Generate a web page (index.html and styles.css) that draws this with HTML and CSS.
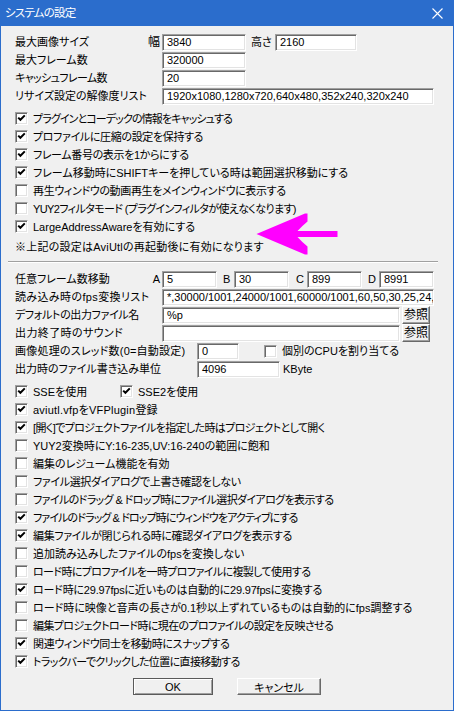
FILE: index.html
```html
<!DOCTYPE html>
<html lang="ja">
<head>
<meta charset="utf-8">
<title>システムの設定</title>
<link rel="stylesheet" href="styles.css">
</head>
<body>
<div class="win">
  <div class="titlebar">
    <span class="title">システムの設定</span>
    <svg class="close" width="11" height="11" viewBox="0 0 11 11"><path d="M0.5 0.5 L10.5 10.5 M10.5 0.5 L0.5 10.5" stroke="#fff" stroke-width="1.1" fill="none"/></svg>
  </div>
  <div class="content">
    <div class="row">
      <div class="lbl w147"><span>最大画像サイズ</span><span class="pre">幅</span></div>
      <div class="inp w84">3840</div>
      <span class="mid">高さ</span>
      <div class="inp w82">2160</div>
    </div>
    <div class="row">
      <div class="lbl w147"><span>最大フレーム数</span></div>
      <div class="inp w84">320000</div>
    </div>
    <div class="row">
      <div class="lbl w147"><span class="s2">キャッシュフレーム数</span></div>
      <div class="inp w84">20</div>
    </div>
    <div class="row">
      <div class="lbl w147"><span>リサイズ設定の解像度リスト</span></div>
      <div class="inp w272">1920x1080,1280x720,640x480,352x240,320x240</div>
    </div>

    <div class="group g1">
      <div class="cbrow"><span class="cb on"></span><span class="s3">プラグインとコーデックの情報をキャッシュする</span></div>
      <div class="cbrow"><span class="cb on"></span><span class="s1">プロファイルに圧縮の設定を保持する</span></div>
      <div class="cbrow"><span class="cb on"></span><span class="s1">フレーム番号の表示を1からにする</span></div>
      <div class="cbrow"><span class="cb on"></span><span>フレーム移動時にSHIFTキーを押している時は範囲選択移動にする</span></div>
      <div class="cbrow"><span class="cb"></span><span class="s1">再生ウィンドウの動画再生をメインウィンドウに表示する</span></div>
      <div class="cbrow"><span class="cb"></span><span class="s2">YUY2フィルタモード (プラグインフィルタが使えなくなります)</span></div>
      <div class="cbrow"><span class="cb on"></span><span>LargeAddressAwareを有効にする</span></div>
    </div>
    <div class="note"><span class="p1">※上記の設定はAviUtlの再起動後に有効になります</span></div>

    <div class="sep"></div>

    <div class="group g2">
      <div class="row">
        <div class="lbl w147"><span>任意フレーム数移動</span><span class="pre2">A</span></div>
        <div class="inp w55">5</div>
        <span class="let">B</span>
        <div class="inp w55">30</div>
        <span class="let c">C</span>
        <div class="inp w55">899</div>
        <span class="let">D</span>
        <div class="inp w55">8991</div>
      </div>
      <div class="row">
        <div class="lbl w147"><span class="p2">読み込み時のfps変換リスト</span></div>
        <div class="inp w272">*,30000/1001,24000/1001,60000/1001,60,50,30,25,24,20,15,12,10</div>
      </div>
      <div class="row">
        <div class="lbl w147"><span class="s1">デフォルトの出力ファイル名</span></div>
        <div class="inp w238">%p</div>
        <span class="btn small">参照</span>
      </div>
      <div class="row">
        <div class="lbl w147"><span class="p2">出力終了時のサウンド</span></div>
        <div class="inp w238"></div>
        <span class="btn small">参照</span>
      </div>
      <div class="row">
        <div class="lbl w182"><span class="p1">画像処理のスレッド数(0=自動設定)</span></div>
        <div class="inp w42">0</div>
        <span class="cb cpu"></span><span>個別のCPUを割り当てる</span>
      </div>
      <div class="row">
        <div class="lbl w182"><span>出力時のファイル書き込み単位</span></div>
        <div class="inp w83">4096</div>
        <span class="unit">KByte</span>
      </div>
    </div>

    <div class="group g3">
      <div class="cbrow">
        <span class="pair"><span class="cb on"></span><span>SSEを使用</span></span>
        <span class="cb on"></span><span>SSE2を使用</span>
      </div>
      <div class="cbrow"><span class="cb on"></span><span class="p1">aviutl.vfpをVFPlugin登録</span></div>
      <div class="cbrow"><span class="cb on"></span><span class="s2">[開く]でプロジェクトファイルを指定した時はプロジェクトとして開く</span></div>
      <div class="cbrow"><span class="cb"></span><span>YUY2変換時にY:16-235,UV:16-240の範囲に飽和</span></div>
      <div class="cbrow"><span class="cb"></span><span>編集のレジューム機能を有効</span></div>
      <div class="cbrow"><span class="cb"></span><span class="s1">ファイル選択ダイアログで上書き確認をしない</span></div>
      <div class="cbrow"><span class="cb"></span><span class="s2">ファイルのドラッグ &amp; ドロップ時にファイル選択ダイアログを表示する</span></div>
      <div class="cbrow"><span class="cb on"></span><span class="s3">ファイルのドラッグ &amp; ドロップ時にウィンドウをアクティブにする</span></div>
      <div class="cbrow"><span class="cb on"></span><span class="s1">編集ファイルが閉じられる時に確認ダイアログを表示する</span></div>
      <div class="cbrow"><span class="cb"></span><span>追加読み込みしたファイルのfpsを変換しない</span></div>
      <div class="cbrow"><span class="cb"></span><span class="s2">ロード時にプロファイルを一時プロファイルに複製して使用する</span></div>
      <div class="cbrow"><span class="cb on"></span><span class="s0">ロード時に29.97fpsに近いものは自動的に29.97fpsに変換する</span></div>
      <div class="cbrow"><span class="cb"></span><span>ロード時に映像と音声の長さが0.1秒以上ずれているものは自動的にfps調整する</span></div>
      <div class="cbrow"><span class="cb"></span><span class="s2">編集プロジェクトロード時に現在のプロファイルの設定を反映させる</span></div>
      <div class="cbrow"><span class="cb on"></span><span class="s1">関連ウィンドウ同士を移動時にスナップする</span></div>
      <div class="cbrow"><span class="cb on"></span><span class="s2">トラックバーでクリックした位置に直接移動する</span></div>
    </div>

    <div class="buttons">
      <span class="btn ok">OK</span>
      <span class="btn cancel">キャンセル</span>
    </div>
  </div>
</div>
<svg class="arrow" width="90" height="48" viewBox="250 210 90 48">
  <path d="M256.5 234 L305 213.5 L307.5 213.5 L307.5 221.5 Q302 226 297.5 231 L337.5 231 L337.5 237 L297.5 237 Q302 242 307.5 246.5 L307.5 254.5 L305 254.5 Z" fill="#ff00ff"/>
</svg>
</body>
</html>
```

FILE: styles.css
```css
html, body {
  margin: 0;
  padding: 0;
  background: #f0f0f0;
}
body {
  position: relative;
  width: 454px;
  height: 711px;
  font-family: "Liberation Sans", "Noto Sans CJK JP", sans-serif;
  font-size: 11px;
  font-feature-settings: "palt";
  color: #000;
  overflow: hidden;
}
.win {
  width: 454px;
  height: 711px;
  box-sizing: border-box;
  border: 1px solid #2b6dcc;
  border-top: 0;
  background: #f0f0f0;
}
.titlebar {
  height: 26px;
  background: #2b6dcc;
  color: #fff;
  display: flex;
  align-items: center;
  justify-content: space-between;
  padding: 0 10px 0 4px;
}
.title {
  font-size: 11.5px;
  line-height: 26px;
  letter-spacing: -0.8px;
}
.close { display: block; }
.content { padding: 8px 0 0 14px; }
.row {
  height: 18px;
  display: flex;
  align-items: flex-start;
  line-height: 17px;
  white-space: nowrap;
}
.lbl {
  display: flex;
  justify-content: space-between;
  box-sizing: border-box;
  flex: none;
}
.w147 { width: 147px; }
.w182 { width: 182px; }
.pre { padding-right: 2px; font-size: 12px; }
.pre2 { padding-right: 2px; }
.mid { width: 24px; margin-left: 5px; flex: none; }
.let { width: 17px; padding-left: 6px; box-sizing: border-box; flex: none; }
.let.c { width: 18px; padding-left: 7px; }

/* hand-tuned tracking to match the dialog font's proportional kana */
.s0 { letter-spacing: -0.2px; }
.s1 { letter-spacing: -0.35px; }
.s2 { letter-spacing: -0.62px; }
.s3 { letter-spacing: -0.9px; }
.p1 { letter-spacing: 0.22px; }
.p2 { letter-spacing: 0.38px; }

.inp {
  height: 17px;
  box-sizing: border-box;
  background: #fff;
  border: 1px solid;
  border-color: #a0a0a0 #fff #fff #a0a0a0;
  box-shadow: inset 1px 1px 0 #696969, inset -1px -1px 0 #e3e3e3;
  padding-left: 4px;
  line-height: 15px;
  font-size: 11px;
  overflow: hidden;
  white-space: nowrap;
  flex: none;
}
.w42 { width: 42px; }
.w55 { width: 55px; }
.w82 { width: 82px; }
.w83 { width: 83px; }
.w84 { width: 84px; }
.w238 { width: 238px; }
.w272 { width: 272px; }
.group.g1 { margin-top: 3px; }
.group.g2 { margin-top: 8px; }
.group.g3 { margin-top: 3px; }
.cbrow {
  height: 18px;
  display: flex;
  align-items: center;
  white-space: nowrap;
}
.cb {
  position: relative;
  width: 13px;
  height: 13px;
  box-sizing: border-box;
  flex: none;
  background: #fff;
  border: 1px solid;
  border-color: #a0a0a0 #fff #fff #a0a0a0;
  box-shadow: inset 1px 1px 0 #696969, inset -1px -1px 0 #e3e3e3;
  margin-right: 5px;
}
.cb.on::after {
  content: "";
  position: absolute;
  left: 1px;
  top: 1px;
  width: 9px;
  height: 9px;
  background: url("data:image/svg+xml;utf8,<svg xmlns='http://www.w3.org/2000/svg' width='9' height='9' viewBox='0 0 9 9'><path d='M1.2 3.6 L3.4 5.8 L7.8 1.4' stroke='black' stroke-width='2' fill='none'/></svg>") no-repeat;
}
.cb.cpu { margin-left: 25px; margin-top: 2px; }
.pair { display: flex; align-items: center; width: 105px; flex: none; }
.note { margin-top: 3px; height: 18px; line-height: 18px; white-space: nowrap; }
.sep {
  margin: 5px 0 0 -7px;
  width: 430px;
  height: 0;
  border-top: 1px solid #a0a0a0;
  border-bottom: 1px solid #fff;
}
.unit { margin-left: 3px; }
.btn {
  display: flex;
  align-items: center;
  justify-content: center;
  box-sizing: border-box;
  background: #f0f0f0;
  border: 1px solid;
  border-color: #fff #696969 #696969 #fff;
  box-shadow: inset -1px -1px 0 #a0a0a0;
  flex: none;
}
.btn.small { width: 28px; height: 18px; margin-left: 2px; margin-top: -1px; font-size: 12px; }
.buttons { margin-top: 8px; padding-left: 118px; display: flex; gap: 24px; }
.btn.ok {
  width: 80px;
  height: 17px;
  border: 1px solid #5a5a5a;
  box-shadow: inset 1px 1px 0 #fff, inset -1px -1px 0 #a0a0a0;
}
.btn.cancel { width: 84px; height: 17px; }
.arrow { position: absolute; left: 250px; top: 210px; }
```
